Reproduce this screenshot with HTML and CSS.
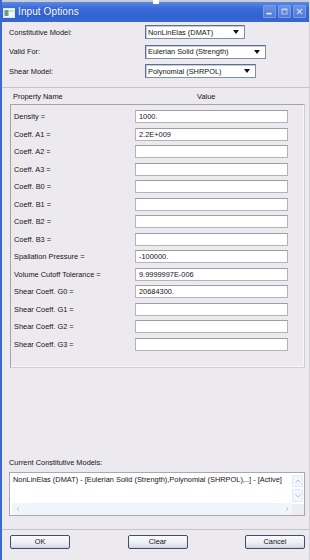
FILE: index.html
```html
<!DOCTYPE html>
<html>
<head>
<meta charset="utf-8">
<link rel="stylesheet" href="styles.css">
</head>
<body>
<div class="window">
  <div class="titlebar">
    <svg class="app-icon" width="12" height="10" viewBox="0 0 12 10">
      <rect x="0.5" y="0.5" width="11" height="9" fill="#f4f6fb" stroke="#dfe6f5"/>
      <rect x="1.5" y="2" width="4" height="6" fill="#6f9a86"/>
      <rect x="6.5" y="2" width="4" height="2" fill="#c9d3e6"/>
    </svg>
    <span class="title">Input Options</span>
    <div class="tb-buttons">
      <div class="tb-btn"><svg width="13" height="13" viewBox="0 0 13 13"><rect x="3" y="8" width="6" height="2" fill="#e4ecfb"/></svg></div>
      <div class="tb-btn"><svg width="13" height="13" viewBox="0 0 13 13"><rect x="3.5" y="3.5" width="6" height="6" fill="none" stroke="#c9d6f2" stroke-width="1"/><rect x="3.5" y="3.5" width="6" height="1.5" fill="#c9d6f2"/></svg></div>
      <div class="tb-btn"><svg width="13" height="13" viewBox="0 0 13 13"><path d="M3.5 3.5 L9.5 9.5 M9.5 3.5 L3.5 9.5" stroke="#c9d6f2" stroke-width="1.4"/></svg></div>
    </div>
    <div class="grip"></div>
  </div>

  <div class="main">
    <div class="form-rows">
      <div class="form-row">
        <span class="label">Constitutive Model:</span>
        <div class="select w1"><span>NonLinElas (DMAT)</span><i class="arrow"></i></div>
      </div>
      <div class="form-row">
        <span class="label">Valid For:</span>
        <div class="select w2"><span>Eulerian Solid (Strength)</span><i class="arrow"></i></div>
      </div>
      <div class="form-row">
        <span class="label">Shear Model:</span>
        <div class="select w3"><span>Polynomial (SHRPOL)</span><i class="arrow"></i></div>
      </div>
    </div>

    <div class="sep sep-top"></div>

    <div class="table-head">
      <span class="th-name">Property Name</span>
      <span class="th-value">Value</span>
    </div>

    <div class="prop-table">
      <span class="pl">Density =</span><div class="field">1000.</div>
      <span class="pl">Coeff. A1 =</span><div class="field">2.2E+009</div>
      <span class="pl">Coeff. A2 =</span><div class="field"></div>
      <span class="pl">Coeff. A3 =</span><div class="field"></div>
      <span class="pl">Coeff. B0 =</span><div class="field"></div>
      <span class="pl">Coeff. B1 =</span><div class="field"></div>
      <span class="pl">Coeff. B2 =</span><div class="field"></div>
      <span class="pl">Coeff. B3 =</span><div class="field"></div>
      <span class="pl">Spallation Pressure =</span><div class="field">-100000.</div>
      <span class="pl">Volume Cutoff Tolerance =</span><div class="field">9.9999997E-006</div>
      <span class="pl">Shear Coeff. G0 =</span><div class="field">20684300.</div>
      <span class="pl">Shear Coeff. G1 =</span><div class="field"></div>
      <span class="pl">Shear Coeff. G2 =</span><div class="field"></div>
      <span class="pl">Shear Coeff. G3 =</span><div class="field"></div>
    </div>

    <div class="current-label">Current Constitutive Models:</div>

    <div class="listbox">
      <div class="list-body">
        <div class="list-text">NonLinElas (DMAT) - [Eulerian Solid (Strength),Polynomial (SHRPOL),..] - [Active]</div>
        <div class="hscroll">
          <div class="sb-btn"><svg width="6" height="6" viewBox="0 0 6 6"><path d="M4 1 L2 3 L4 5" fill="none" stroke="#b9c6de" stroke-width="1"/></svg></div>
          <div class="hs-track"></div>
          <div class="sb-btn"><svg width="6" height="6" viewBox="0 0 6 6"><path d="M2 1 L4 3 L2 5" fill="none" stroke="#b9c6de" stroke-width="1"/></svg></div>
        </div>
      </div>
      <div class="vscroll">
        <div class="sb-btn vb"><svg width="8" height="6" viewBox="0 0 8 6"><path d="M1.5 4.5 L4 2 L6.5 4.5" fill="none" stroke="#b3c1dc" stroke-width="1"/></svg></div>
        <div class="sb-btn vb"><svg width="8" height="6" viewBox="0 0 8 6"><path d="M1.5 1.5 L4 4 L6.5 1.5" fill="none" stroke="#b3c1dc" stroke-width="1"/></svg></div>
        <div class="corner"></div>
      </div>
    </div>

    <div class="sep sep-bottom"></div>

    <div class="buttons">
      <div class="btn">OK</div>
      <div class="btn">Clear</div>
      <div class="btn">Cancel</div>
    </div>
  </div>
</div>
</body>
</html>
```

FILE: styles.css
```css
html, body {
  margin: 0;
  padding: 0;
  background: #ece9ef;
}

body {
  font-family: "Liberation Sans", Arial, sans-serif;
  font-size: 7.4px;
  color: #141414;
}

.window {
  position: relative;
  width: 310px;
  height: 560px;
  box-sizing: border-box;
  border-left: 2px solid #3b69cf;
  border-right: 1px solid #d3d1d8;
  background: #ece9ef;
  overflow: hidden;
}

.titlebar {
  position: relative;
  height: 22px;
  margin-left: -2px;
  margin-right: -1px;
  box-sizing: border-box;
  border-top: 2px solid #c9cbd6;
  background: linear-gradient(#5a8ae4 0%, #3a6cd8 30%, #3063d0 70%, #3868d2 100%);
  display: flex;
  align-items: center;
  padding-left: 3px;
}

.app-icon {
  display: block;
  margin-top: 1px;
}

.title {
  margin-left: 3px;
  color: #ffffff;
  font-size: 10px;
  line-height: 12px;
  text-shadow: 0 0 1px rgba(20, 40, 120, 0.6);
  letter-spacing: 0.1px;
}

.tb-buttons {
  margin-left: auto;
  margin-right: 4px;
  display: flex;
  gap: 2px;
  margin-top: -1px;
}

.tb-btn {
  width: 13px;
  height: 13px;
  box-sizing: border-box;
  border: 1px solid #7c9de2;
  border-radius: 1px;
  background: linear-gradient(#6b92e2, #4f7ad8);
  display: flex;
  align-items: center;
  justify-content: center;
}

.tb-btn svg {
  display: block;
}

.grip {
  position: absolute;
  left: 153px;
  top: -2px;
  width: 6px;
  height: 4px;
  background: #ffffff;
}

.main {
  padding: 3px 4px 0 7px;
}

.form-rows {
  display: flex;
  flex-direction: column;
  gap: 5.5px;
}

.form-row {
  display: flex;
  align-items: center;
  height: 14px;
}

.label {
  width: 136px;
  flex: none;
}

.select {
  position: relative;
  height: 14px;
  box-sizing: border-box;
  border: 1px solid #5f6f93;
  border-right-color: #7f8eae;
  border-bottom-color: #7f8eae;
  background: #ffffff;
  box-shadow: inset 1px 1px 0 #c4cbdb;
  display: flex;
  align-items: center;
  padding-left: 2px;
  white-space: nowrap;
}

.select.w1 { width: 100px; }
.select.w2 { width: 121px; }
.select.w3 { width: 111px; }

.arrow {
  position: absolute;
  right: 5px;
  top: 4px;
  width: 0;
  height: 0;
  border-left: 3px solid transparent;
  border-right: 3px solid transparent;
  border-top: 4px solid #111111;
}

.sep {
  margin-left: -7px;
  margin-right: -4px;
  height: 1px;
  background: #c6c4cb;
}

.sep-top {
  margin-top: 9px;
}

.table-head {
  position: relative;
  height: 10px;
  margin-top: 4px;
  line-height: 10px;
}

.th-name {
  margin-left: 4px;
}

.th-value {
  position: absolute;
  left: 188px;
  top: 0;
}

.prop-table {
  margin-top: 2px;
  margin-left: 1px;
  height: 264px;
  box-sizing: border-box;
  border-top: 1px solid #a4a3a9;
  border-left: 1px solid #a4a3a9;
  border-right: 1px solid #cfcdd4;
  border-bottom: 1px solid #cfcdd4;
  box-shadow: inset -1px -1px 0 #f7f6f9;
  padding: 5px 0 0 3px;
  display: grid;
  grid-template-columns: 121px 153px;
  grid-auto-rows: 13px;
  row-gap: 4.5px;
  align-items: center;
  align-content: start;
}

.pl {
  white-space: nowrap;
}

.field {
  height: 13px;
  box-sizing: border-box;
  border: 1px solid #b4b3ba;
  border-top-color: #9e9da4;
  background: #ffffff;
  padding-left: 3px;
  line-height: 11px;
}

.current-label {
  margin-top: 90px;
  height: 10px;
  line-height: 10px;
}

.listbox {
  margin-top: 4px;
  height: 44px;
  box-sizing: border-box;
  border: 1px solid #a9a8ae;
  background: #ffffff;
  display: flex;
}

.list-body {
  flex: 1;
  display: flex;
  flex-direction: column;
  min-width: 0;
}

.list-text {
  flex: 1;
  padding: 2px 0 0 3px;
  line-height: 10px;
  white-space: nowrap;
  overflow: hidden;
}

.hscroll {
  height: 12px;
  display: flex;
  margin-left: 2px;
  background: #eef3fc;
}

.hs-track {
  flex: 1;
  background: #eef3fc;
}

.sb-btn {
  width: 11px;
  height: 12px;
  display: flex;
  align-items: center;
  justify-content: center;
  background: #f2f5fb;
}

.sb-btn svg {
  display: block;
}

.vscroll {
  width: 12px;
  flex: none;
  display: flex;
  flex-direction: column;
  padding-top: 2px;
  gap: 2px;
}

.vb {
  width: 11px;
  height: 13px;
  box-sizing: border-box;
  border: 1px solid #e3e8f3;
  border-radius: 1px;
  background: #f3f6fc;
}

.corner {
  margin-top: auto;
  height: 12px;
  background: #eeedf1;
}

.sep-bottom {
  margin-top: 13px;
}

.buttons {
  margin-top: 5px;
  padding-left: 1px;
  display: flex;
  justify-content: space-between;
}

.btn {
  width: 60px;
  height: 14px;
  box-sizing: border-box;
  border: 1px solid #3f4d6e;
  border-radius: 2px;
  background: linear-gradient(#fbfbfd 0%, #eef0f5 50%, #dde1ea 85%, #c9cfdc 100%);
  text-align: center;
  line-height: 12px;
}
```
